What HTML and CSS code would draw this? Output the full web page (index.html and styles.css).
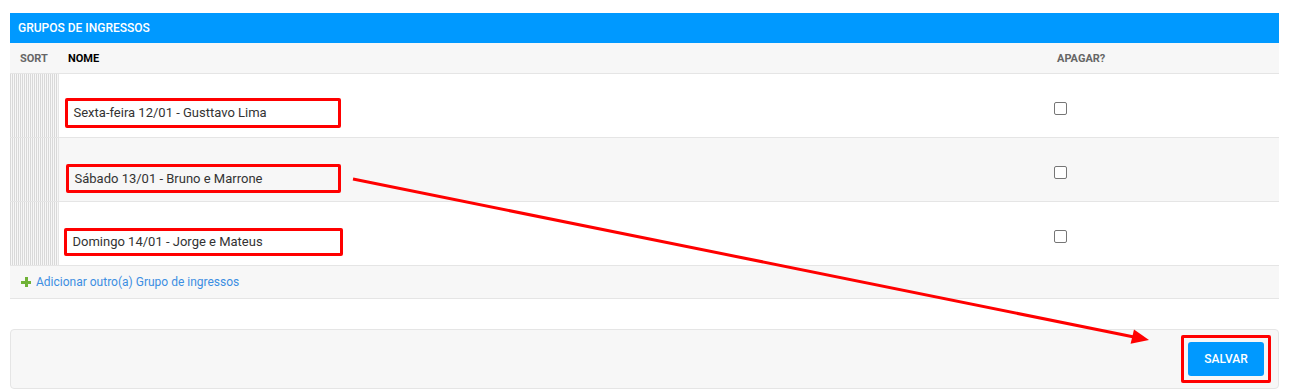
FILE: index.html
```html
<!DOCTYPE html>
<html lang="pt">
<head>
    <meta charset="UTF-8">
    <title>Grupos de ingressos</title>
    <link rel="stylesheet" href="styles.css">
</head>
<body>
    <div class="page">
        <div class="inline-group">
            <h2 class="group-title">Grupos de ingressos</h2>
            <table class="tabular">
                <thead>
                    <tr>
                        <th class="col-sort">Sort</th>
                        <th class="col-name">Nome</th>
                        <th class="col-del">Apagar?</th>
                    </tr>
                </thead>
                <tbody>
                    <tr class="row1">
                        <td class="drag"></td>
                        <td class="name"><span class="field field-a">Sexta-feira 12/01 - Gusttavo Lima</span></td>
                        <td class="del"><span class="check"></span></td>
                    </tr>
                    <tr class="row2">
                        <td class="drag"></td>
                        <td class="name"><span class="field field-b">Sábado 13/01 - Bruno e Marrone</span></td>
                        <td class="del"><span class="check"></span></td>
                    </tr>
                    <tr class="row1">
                        <td class="drag"></td>
                        <td class="name"><span class="field field-c">Domingo 14/01 - Jorge e Mateus</span></td>
                        <td class="del"><span class="check"></span></td>
                    </tr>
                </tbody>
            </table>
            <div class="add-row">
                <span class="plus"></span>
                <a href="#">Adicionar outro(a) Grupo de ingressos</a>
            </div>
        </div>

        <div class="submit-row">
            <span class="mark"><button class="btn-save">Salvar</button></span>
        </div>

        <svg class="arrow" width="1316" height="390" viewBox="0 0 1316 390">
            <line x1="353" y1="179" x2="1134" y2="337" stroke="#ff0000" stroke-width="3"/>
            <polygon points="1149,340 1130.6,343.8 1134,329.6" fill="#ff0000"/>
        </svg>
    </div>
</body>
</html>
```

FILE: styles.css
```css
body { margin: 0; font-family: Roboto, "Liberation Sans", Arial, sans-serif; color: #333; background: #fff; }
.page { width: 1269px; padding: 13px 37px 0 10px; }

.group-title {
    margin: 0; height: 30px; line-height: 30px; padding: 0 8px;
    background: #0099ff; color: #fff; font-size: 12px; font-weight: 500; text-transform: uppercase;
}

.tabular { width: 100%; border-collapse: collapse; }
.tabular th {
    height: 30px; padding: 0 10px; text-align: left; background: #f7f7f7;
    font-size: 11px; font-weight: 700; text-transform: uppercase; color: #666;
    border-bottom: 1px solid #e5e5e5;
}
.tabular th.col-name { color: #000; }
.tabular th.col-sort { width: 28px; }
.tabular th.col-del { width: 212px; }
.tabular td { height: 63px; padding: 0; border-bottom: 1px solid #e5e5e5; vertical-align: top; }
.row2 td { background: #f7f7f7; }

.drag {
    background: repeating-linear-gradient(90deg, #d9d9d9 0 1px, #f7f7f7 1px 2px) !important;
    border-right: 1px solid #e5e5e5;
}

.name { padding: 0 0 0 6px !important; }
.field {
    display: inline-block; box-sizing: border-box; height: 30px; line-height: 24px;
    padding: 0 6px; border: 3px solid #ff0000; border-radius: 2px;
    font-size: 13px; color: #333; margin-top: 24px; width: 276px;
}
.field-a { margin-left: 0; }
.field-b { margin-left: 1px; height: 29px; margin-top: 26px; width: 275px; }
.field-c { margin-left: -1px; height: 28px; margin-top: 26px; width: 279px; line-height: 22px; }

.del { padding: 0 0 0 7px !important; }
.check {
    display: block; width: 11px; height: 11px; margin-top: 28px;
    border: 1px solid #767676; border-radius: 2px; background: #fff;
}

.add-row {
    height: 32px; display: flex; align-items: center; padding-left: 11px;
    background: #f7f7f7; border-bottom: 1px solid #e5e5e5; font-size: 12px;
}
.add-row a { color: #3c8ee2; text-decoration: none; margin-left: 5px; }
.plus { position: relative; width: 10px; height: 10px; }
.plus::before, .plus::after { content: ""; position: absolute; background: #70b237; }
.plus::before { left: 0; top: 4px; width: 10px; height: 3px; }
.plus::after { left: 4px; top: 0; width: 3px; height: 10px; }

.submit-row {
    margin-top: 30px; height: 58px; display: flex; justify-content: flex-end; align-items: center;
    padding-right: 7px; background: #f7f7f7; border: 1px solid #e5e5e5; border-radius: 4px;
}
.mark { display: block; padding: 4px; border: 3px solid #ff0000; border-radius: 2px; }
.btn-save {
    display: block; width: 76px; height: 34px; border: 0; border-radius: 3px;
    background: #0099ff; color: #fff; font-family: inherit; font-size: 12px; font-weight: 500;
    text-transform: uppercase;
}

.arrow { position: absolute; left: 0; top: 0; pointer-events: none; }
```
